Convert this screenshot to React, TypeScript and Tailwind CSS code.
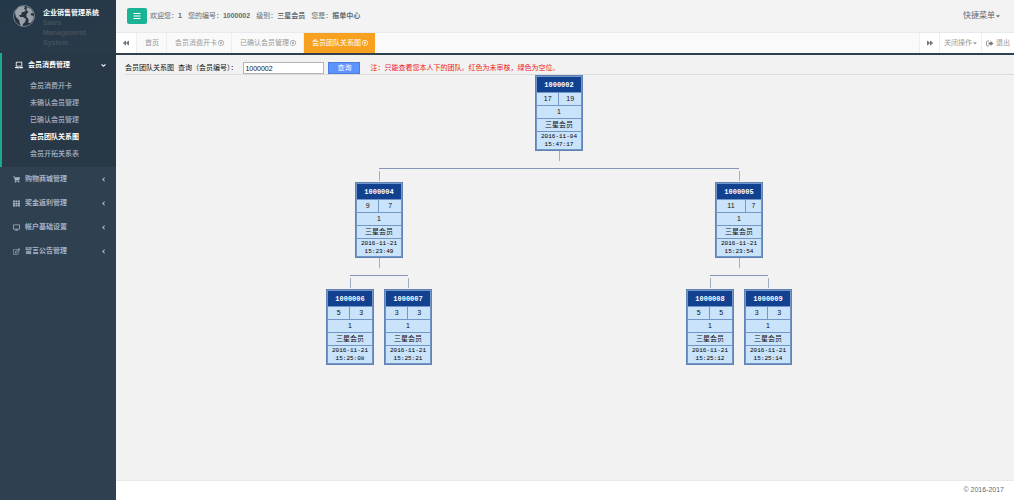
import React, { FC, ReactNode } from 'react';
import {
    FaAngleDown,
    FaAngleLeft,
    FaBackward,
    FaBars,
    FaCaretDown,
    FaDesktop,
    FaForward,
    FaLaptop,
    FaRegEdit,
    FaRegTimesCircle,
    FaShoppingCart,
    FaTh,
} from 'react-icons/fa';

type Member = {
    id: string;
    left: number;
    right: number;
    date: string;
    time: string;
    children?: Member[];
};

const team: Member = {
    id: '1000002', left: 17, right: 19, date: '2016-11-04', time: '15:47:17',
    children: [
        {
            id: '1000004', left: 9, right: 7, date: '2016-11-21', time: '15:23:49',
            children: [
                { id: '1000006', left: 5, right: 3, date: '2016-11-21', time: '15:25:08' },
                { id: '1000007', left: 3, right: 3, date: '2016-11-21', time: '15:25:21' },
            ],
        },
        {
            id: '1000005', left: 11, right: 7, date: '2016-11-21', time: '15:23:54',
            children: [
                { id: '1000008', left: 5, right: 5, date: '2016-11-21', time: '15:25:12' },
                { id: '1000009', left: 3, right: 3, date: '2016-11-21', time: '15:25:14' },
            ],
        },
    ],
};

const subMenu = ['会员消费开卡', '未确认会员管理', '已确认会员管理', '会员团队关系图', '会员开拓关系表'];

const menu = [
    { label: '购物商城管理', icon: <FaShoppingCart /> },
    { label: '奖金返利管理', icon: <FaTh /> },
    { label: '帐户基础设置', icon: <FaDesktop /> },
    { label: '留言公告管理', icon: <FaRegEdit /> },
];

const tabs = ['会员消费开卡', '已确认会员管理', '会员团队关系图'];

const Globe: FC = () => (
    <svg viewBox="0 0 24 24" className="h-6 w-6 shrink-0" aria-hidden="true">
        <circle cx="12" cy="12" r="10.5" fill="#26333f" stroke="#737e88" strokeWidth="1" />
        <path d="M3.500 6.500 7 3l4-1 2 1-1 2 2 1-2 2-2 0-1 3-2 0 1 2 3 0 3 2-1 3-2 2-1 3-2-3-1-4-3-3-1-4z" fill="#99a1a9" />
        <path d="M15 3l4 2 2.500 4-2 0-1 2 3 1 0 3-3 4-2 0 0-4-2-2 0-3 2-2-2-2z" fill="#99a1a9" />
    </svg>
);

const ExitIcon: FC = () => (
    <svg viewBox="0 0 16 14" className="h-[7px] w-2" aria-hidden="true">
        <path d="M6 2H3a2 2 0 0 0-2 2v6a2 2 0 0 0 2 2h3" fill="none" stroke="#777" strokeWidth="1.500" />
        <path d="M5 5h4V2l6 5-6 5V9H5z" fill="#777" />
    </svg>
);

const Sidebar: FC = () => (
    <aside className="w-[116px] shrink-0 bg-[#2f4050] text-[#a7b1c2]">
        <div className="flex h-[53px] gap-[7px] bg-linear-to-br from-[#22384a] to-[#2b3a48] pt-1 pl-3">
            <Globe />
            <div className="pt-1 text-[7px] leading-[10px] font-bold text-[#43515e]">
                <p className="whitespace-nowrap text-white">企业销售管理系统</p>
                <p className="w-12">Sales Management System</p>
            </div>
        </div>
        <nav>
            <div className="h-[114px] border-l-2 border-[#19aa8d] bg-[#293846]">
                <a href="#" className="flex h-6 items-center pr-[9px] pl-[13px] text-[7px] font-bold text-white">
                    <FaLaptop className="mr-[5px] size-2" />
                    会员消费管理
                    <FaAngleDown className="ml-auto size-[7px]" />
                </a>
                <ul className="pt-px">
                    {subMenu.map((item) => (
                        <li key={item}>
                            <a
                                href="#"
                                className={`flex h-[17px] items-center pl-7 text-[7px] ${item === '会员团队关系图' ? 'font-bold text-white' : 'font-medium'}`}
                            >
                                {item}
                            </a>
                        </li>
                    ))}
                </ul>
            </div>
            {menu.map((item) => (
                <a key={item.label} href="#" className="flex h-6 items-center pr-[9px] pl-[13px] text-[7px] font-bold">
                    <span className="mr-[5px] [&>svg]:size-[7px]">{item.icon}</span>
                    {item.label}
                    <FaAngleLeft className="ml-auto size-[7px]" />
                </a>
            ))}
        </nav>
    </aside>
);

const Header: FC = () => (
    <header className="flex h-8 items-center bg-[#f3f3f4] pr-[13px] pl-[11px] text-[7px] text-[#676a6c]">
        <button aria-label="菜单" className="mr-[3px] flex h-4 w-5 items-center justify-center rounded-[2px] bg-[#1ab394] text-white">
            <FaBars className="size-2" />
        </button>
        <div className="flex gap-[6px]">
            <span>欢迎您：<b>1</b></span>
            <span>您的编号：<b>1000002</b></span>
            <span>级别：<b>三星会员</b></span>
            <span>您是：<b>报单中心</b></span>
        </div>
        <button className="ml-auto flex items-center text-[8px]">
            快捷菜单 <FaCaretDown className="size-[6px]" />
        </button>
    </header>
);

const TabBar: FC = () => (
    <div className="flex h-[23px] border-t border-b-2 border-t-[#e7eaec] border-b-[#2f4050] bg-[#fafafa] text-[7px] text-[#999]">
        <button aria-label="向左" className="flex w-[21px] items-center justify-center border-r border-[#eee] bg-white text-[#777]">
            <FaBackward className="size-[6px]" />
        </button>
        <a href="#" className="flex items-center border-r border-[#eee] pr-[7px] pl-2">首页</a>
        {tabs.map((tab) => (
            <a
                key={tab}
                href="#"
                className={`flex items-center gap-px pr-[7px] pl-2 ${tab === '会员团队关系图' ? 'bg-[#f8a11f] text-white' : 'border-r border-[#eee]'}`}
            >
                {tab} <FaRegTimesCircle className="size-[6px]" />
            </a>
        ))}
        <button aria-label="向右" className="ml-auto flex w-[21px] items-center justify-center border-x border-[#eee] bg-white text-[#777]">
            <FaForward className="size-[6px]" />
        </button>
        <button className="flex w-[42px] items-center justify-end border-r border-[#eee] bg-white pr-[3px]">
            关闭操作 <FaCaretDown className="size-[6px]" />
        </button>
        <a href="#" className="flex w-8 items-center justify-center gap-[2px] bg-white">
            <ExitIcon /> 退出
        </a>
    </div>
);

const Cell: FC<{ children: ReactNode; span?: boolean }> = ({ children, span }) => (
    <td colSpan={span ? 2 : 1} className="h-3 bg-[#c9e3fb] p-0">{children}</td>
);

const MemberCard: FC<{ member: Member }> = ({ member }) => (
    <table className="w-12 border-separate border-spacing-px border border-[#6182b4] bg-[#7396c6] text-center text-[7px] leading-[8px] text-[#111]">
        <thead>
            <tr>
                <th colSpan={2} className="h-[15px] bg-[#12428f] p-0 font-[Liberation_Mono,monospace] text-white">{member.id}</th>
            </tr>
        </thead>
        <tbody>
            <tr>
                <Cell>{member.left}</Cell>
                <Cell>{member.right}</Cell>
            </tr>
            <tr><Cell span>1</Cell></tr>
            <tr><Cell span>三星会员</Cell></tr>
            <tr>
                <td colSpan={2} className="h-[17px] bg-[#c9e3fb] p-0 font-[Liberation_Mono,monospace] text-[6px] text-black">
                    {member.date}<br />{member.time}
                </td>
            </tr>
        </tbody>
    </table>
);

const Branch: FC<{ member: Member }> = ({ member }) => (
    <div className="mx-auto flex w-fit flex-col items-center">
        <MemberCard member={member} />
        {member.children && (
            <>
                <div className="mb-[7px] h-[10px] w-px bg-[#a3aec2]" />
                <div className="h-px w-1/2 bg-[#8497b6]" />
                <div className="flex">
                    {member.children.map((child) => (
                        <div key={child.id} className={`flex flex-col items-center ${child.children ? 'w-[360px]' : 'w-[58px]'}`}>
                            <div className="mt-[2px] mb-px h-[10px] w-px bg-[#a3aec2]" />
                            <Branch member={child} />
                        </div>
                    ))}
                </div>
            </>
        )}
    </div>
);

const App: FC = () => {
    return (
        <div className="flex min-h-screen bg-[#f3f3f4] font-['Liberation_Sans','Noto_Sans_CJK_SC',sans-serif]">
            <Sidebar />
            <div className="flex min-w-0 flex-1 flex-col">
                <Header />
                <TabBar />
                <main className="flex-1 bg-[#f2f2f2] pl-[9px]">
                    <form className="flex h-5 items-end border-b border-[#dcdcdc] text-[7px] text-[#111]" onSubmit={(e) => e.preventDefault()}>
                        <label htmlFor="member" className="flex h-3 items-center whitespace-pre">会员团队关系图  查询（会员编号）：</label>
                        <input
                            id="member"
                            defaultValue="1000002"
                            className="ml-[6px] h-3 w-[81px] border border-[#b5b5b5] bg-white px-px"
                        />
                        <button className="mx-1 h-3 w-8 border border-[#4a7de0] bg-[#5c93fc] text-white">查询</button>
                        <p className="ml-[6px] flex h-3 items-center text-[#f01818]">注：只能查看您本人下的团队。红色为未审核，绿色为空位。</p>
                    </form>
                    <div className="pr-[21px]">
                        <Branch member={team} />
                    </div>
                </main>
                <footer className="flex h-5 items-center justify-end border-t border-[#e7eaec] bg-white pr-[10px] text-[7px] text-[#676a6c]">
                    © 2016-2017
                </footer>
            </div>
        </div>
    );
};

export default App;
